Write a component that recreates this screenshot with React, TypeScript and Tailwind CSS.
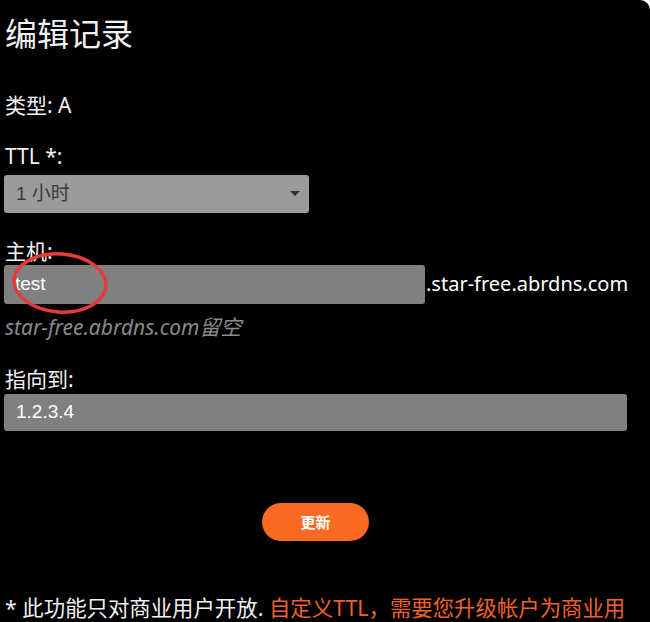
import React from "react";

export default function App() {
  const font = { fontFamily: '"Noto Sans", "Noto Sans CJK SC", sans-serif' };
  const arial = { fontFamily: '"Liberation Sans", "Noto Sans CJK SC", sans-serif' };
  return (
    <div className="w-[650px] h-[622px] bg-white overflow-hidden">
      <div
        className="relative w-full h-full bg-black rounded-tr-[10px] text-[#f2f2f2] flex flex-col items-start pl-[5px] pt-[16px] overflow-hidden"
        style={font}
      >
        <h1 className="text-[32px] leading-[36px] font-normal">编辑记录</h1>

        <div className="mt-[39px] text-[21px] leading-[28px]">类型: A</div>

        <div className="mt-[23px] text-[21px] leading-[28px]">TTL *:</div>
        <div className="mt-[5px] -ml-[1px] w-[305px] h-[38px] rounded-[3px] bg-[#9b9b9b] flex items-center justify-between pl-[12px] pr-[8px]">
          <span className="text-[19px] text-[#3a3a3a]" style={arial}>
            1 小时
          </span>
          <svg width="12" height="7" viewBox="0 0 12 7">
            <path d="M1 1 L11 1 L6 6 Z" fill="#333" />
          </svg>
        </div>

        <div className="mt-[24px] text-[21px] leading-[28px]">主机:</div>
        <div className="relative -ml-[1px] flex items-center">
          <div className="w-[421px] h-[39px] rounded-[3px] bg-[#808080] flex items-center pl-[11px]">
            <span className="text-[19px] text-white" style={arial}>
              test
            </span>
          </div>
          <span className="text-[20px] text-white ml-[1px]">.star-free.abrdns.com</span>
          <svg
            className="absolute left-[5px] -top-[14px]"
            width="100"
            height="66"
            viewBox="0 0 100 66"
          >
            <ellipse
              cx="51"
              cy="32"
              rx="46"
              ry="29"
              fill="none"
              stroke="#e63b3b"
              strokeWidth="3.5"
              transform="rotate(4 51 32)"
            />
          </svg>
        </div>
        <div className="mt-[9px] text-[21px] leading-[28px] italic text-[#8a8a8a]">
          star-free.abrdns.com留空
        </div>

        <div className="mt-[24px] text-[21px] leading-[28px]">指向到:</div>
        <div className="mt-[1px] -ml-[1px] w-[623px] h-[38px] rounded-[3px] bg-[#808080] flex items-center pl-[12px]">
          <span className="text-[19px] text-white" style={arial}>
            1.2.3.4
          </span>
        </div>

        <div className="mt-[72px] w-full flex justify-center">
          <button className="ml-[-24px] w-[107px] h-[38px] rounded-full bg-[#fb6a22] text-white text-[15px] font-bold">
            更新
          </button>
        </div>

        <div className="mt-[53px] text-[21.4px] leading-[28px] whitespace-nowrap">
          <span className="text-[#f2f2f2]">* 此功能只对商业用户开放. </span>
          <span className="text-[#f0622a]">自定义TTL，需要您升级帐户为商业用</span>
        </div>
      </div>
    </div>
  );
}
